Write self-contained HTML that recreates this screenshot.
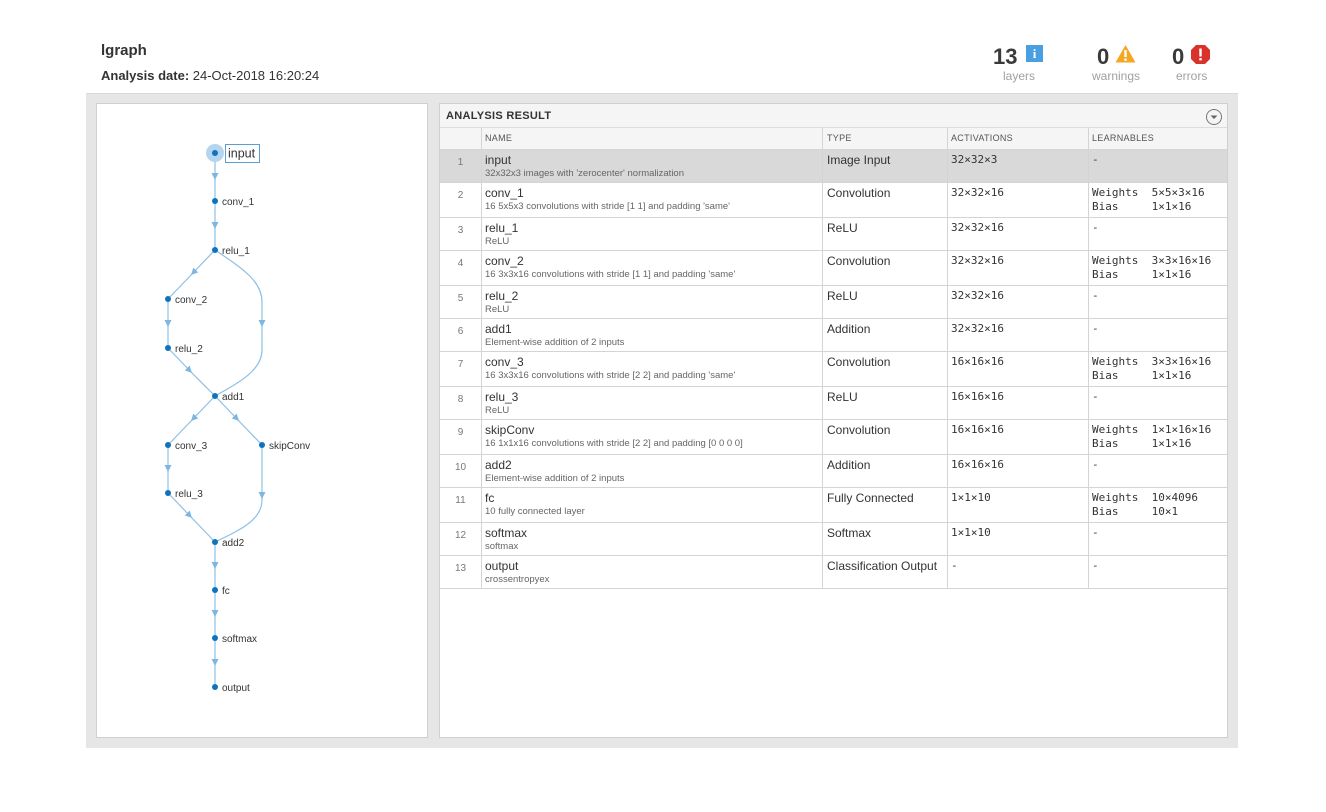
<!DOCTYPE html>
<html><head><meta charset="utf-8"><style>
*{margin:0;padding:0;box-sizing:border-box}
body{width:1326px;height:812px;background:#fff;font-family:"Liberation Sans",Arial,sans-serif;position:relative;overflow:hidden;color:#333}
.abs{position:absolute}
.title{left:101px;top:42px;font-size:15px;font-weight:bold;color:#333}
.date{left:101px;top:68px;font-size:13px;color:#333}
.stat{top:44px;font-size:22px;font-weight:bold;color:#3a3a3a}
.lbl{top:69px;font-size:12px;color:#a0a0a0}
.bg{left:86px;top:93px;width:1152px;height:655px;background:#e6e6e6;border-top:1px solid #d8d8d8}
.lp{left:96px;top:103px;width:332px;height:635px;background:#fff;border:1px solid #d0d0d0}
.rp{left:439px;top:103px;width:789px;height:635px;background:#fff;border:1px solid #d0d0d0}
.hdr{position:absolute;left:0;top:0;width:787px;height:24px;background:#f5f5f5;border-bottom:1px solid #ddd;font-size:11px;font-weight:bold;letter-spacing:.3px;padding:6px 0 0 6px;color:#333}
.row{position:absolute;left:0;width:787px;border-bottom:1px solid #d4d4d4;font-size:12px}
.row>div{position:absolute;top:0;bottom:0;border-right:1px solid #d4d4d4}
.c0{left:0;width:42px;text-align:center;color:#777;font-size:10px;padding-top:7px}
.c1{left:42px;width:341px;padding:3px 0 0 3px}
.c2{left:383px;width:125px;padding:3px 0 0 4px}
.c3{left:508px;width:141px;padding:3px 0 0 3px;font-family:"DejaVu Sans Mono","Liberation Mono",monospace;font-size:11px}
.c4{left:649px;width:138px;border-right:none!important;padding:3px 0 0 3px;font-family:"DejaVu Sans Mono","Liberation Mono",monospace;font-size:11px;line-height:14px;white-space:pre}
.sub{font-size:9.5px;color:#666;margin-top:1px}
.ch{top:24px;height:22px;background:#f5f5f5;font-size:9px;color:#555}
.ch>div{padding-top:5px!important;font-family:"Liberation Sans",sans-serif!important;font-size:9px!important;letter-spacing:.3px;line-height:normal!important}
.sel{background:#d9d9d9}
</style></head><body>
<div class="abs title">lgraph</div>
<div class="abs date"><b>Analysis date:</b> 24-Oct-2018 16:20:24</div>
<div class="abs stat" style="left:993px">13</div>
<div class="abs" style="left:1026px;top:45px;width:17px;height:17px;background:#4a9fe0;color:#fff;font:bold 13px 'Liberation Serif',serif;text-align:center;line-height:17px">i</div>
<div class="abs lbl" style="left:1003px">layers</div>
<div class="abs stat" style="left:1097px">0</div>
<svg class="abs" style="left:1115px;top:44px" width="21" height="19"><path d="M10.5 1 L20.5 18.5 L0.5 18.5Z" fill="#f5a623"/><rect x="9.3" y="6" width="2.4" height="7" fill="#fff"/><rect x="9.3" y="14.5" width="2.4" height="2.3" fill="#fff"/></svg>
<div class="abs lbl" style="left:1092px">warnings</div>
<div class="abs stat" style="left:1172px">0</div>
<svg class="abs" style="left:1190px;top:44px" width="21" height="21"><polygon points="6,1 15,1 20,6 20,15 15,20 6,20 1,15 1,6" fill="#d9322a"/><rect x="9.3" y="4.5" width="2.4" height="8" fill="#fff"/><rect x="9.3" y="14" width="2.4" height="2.4" fill="#fff"/></svg>
<div class="abs lbl" style="left:1176px">errors</div>
<div class="abs bg"></div>
<div class="abs lp"></div>
<svg class="abs" style="left:0;top:0" width="1326" height="812">
<defs><marker id="a" viewBox="0 0 10 10" refX="10" refY="5" markerWidth="7" markerHeight="7" markerUnits="userSpaceOnUse" orient="auto"><path d="M0 0L10 5L0 10z" fill="#7fb6e0"/></marker></defs>
<g stroke="#8cc0e6" stroke-width="1.2" fill="none">
<line x1="215" y1="153" x2="215" y2="180" marker-end="url(#a)"/><line x1="215" y1="178" x2="215" y2="201"/>
<line x1="215" y1="201" x2="215" y2="229" marker-end="url(#a)"/><line x1="215" y1="227" x2="215" y2="250"/>
<line x1="215" y1="250" x2="191" y2="275" marker-end="url(#a)"/><line x1="192" y1="274" x2="168" y2="299"/>
<line x1="168" y1="299" x2="168" y2="327" marker-end="url(#a)"/><line x1="168" y1="325" x2="168" y2="348"/>
<line x1="168" y1="348" x2="192" y2="373" marker-end="url(#a)"/><line x1="191" y1="372" x2="215" y2="396"/>
<path d="M215 250 C245 270 262 282 262 302 L262 327" marker-end="url(#a)"/><path d="M262 325 L262 350 C262 370 240 382 215 396"/>
<line x1="215" y1="396" x2="191" y2="421" marker-end="url(#a)"/><line x1="192" y1="420" x2="168" y2="445"/>
<line x1="215" y1="396" x2="239" y2="421" marker-end="url(#a)"/><line x1="238" y1="420" x2="262" y2="445"/>
<line x1="168" y1="445" x2="168" y2="472" marker-end="url(#a)"/><line x1="168" y1="470" x2="168" y2="493"/>
<line x1="168" y1="493" x2="192" y2="518" marker-end="url(#a)"/><line x1="191" y1="517" x2="215" y2="542"/>
<line x1="262" y1="445" x2="262" y2="499" marker-end="url(#a)"/><path d="M262 497 L262 500 C262 520 240 530 215 542"/>
<line x1="215" y1="542" x2="215" y2="569" marker-end="url(#a)"/><line x1="215" y1="567" x2="215" y2="590"/>
<line x1="215" y1="590" x2="215" y2="617" marker-end="url(#a)"/><line x1="215" y1="615" x2="215" y2="638"/>
<line x1="215" y1="638" x2="215" y2="666" marker-end="url(#a)"/><line x1="215" y1="664" x2="215" y2="687"/>
</g>
<circle cx="215" cy="153" r="9" fill="#b5d5ef"/>
<g fill="#0e72bd">
<circle cx="215" cy="153" r="3"/><circle cx="215" cy="201" r="3"/><circle cx="215" cy="250" r="3"/>
<circle cx="168" cy="299" r="3"/><circle cx="168" cy="348" r="3"/><circle cx="215" cy="396" r="3"/>
<circle cx="168" cy="445" r="3"/><circle cx="262" cy="445" r="3"/><circle cx="168" cy="493" r="3"/>
<circle cx="215" cy="542" r="3"/><circle cx="215" cy="590" r="3"/><circle cx="215" cy="638" r="3"/><circle cx="215" cy="687" r="3"/>
</g>
<rect x="225.5" y="144.5" width="34" height="18" fill="#fff" stroke="#5a9fd4"/>
<g font-family="Liberation Sans,sans-serif" font-size="10" fill="#333">
<text x="228" y="157.5" font-size="12.5">input</text>
<text x="222" y="205">conv_1</text><text x="222" y="254">relu_1</text>
<text x="175" y="303">conv_2</text><text x="175" y="352">relu_2</text><text x="222" y="400">add1</text>
<text x="175" y="449">conv_3</text><text x="269" y="449">skipConv</text><text x="175" y="497">relu_3</text>
<text x="222" y="546">add2</text><text x="222" y="594">fc</text><text x="222" y="642">softmax</text><text x="222" y="691">output</text>
</g>
</svg>
<div class="abs rp">
<div class="hdr">ANALYSIS RESULT</div>
<svg style="position:absolute;left:765px;top:4px" width="18" height="18"><circle cx="9" cy="9" r="7.5" fill="none" stroke="#777"/><path d="M5.5 7.5L12.5 7.5L9 11z" fill="#666"/></svg>
<div class="row ch"><div class="c0"></div><div class="c1">NAME</div><div class="c2">TYPE</div><div class="c3">ACTIVATIONS</div><div class="c4">LEARNABLES</div></div>
<div class="row sel" style="top:46px;height:33px"><div class="c0">1</div><div class="c1">input<div class="sub">32x32x3 images with 'zerocenter' normalization</div></div><div class="c2">Image Input</div><div class="c3">32×32×3</div><div class="c4">-</div></div>
<div class="row" style="top:79px;height:35px"><div class="c0">2</div><div class="c1">conv_1<div class="sub">16 5x5x3 convolutions with stride [1 1] and padding 'same'</div></div><div class="c2">Convolution</div><div class="c3">32×32×16</div><div class="c4">Weights  5×5×3×16
Bias     1×1×16</div></div>
<div class="row" style="top:114px;height:33px"><div class="c0">3</div><div class="c1">relu_1<div class="sub">ReLU</div></div><div class="c2">ReLU</div><div class="c3">32×32×16</div><div class="c4">-</div></div>
<div class="row" style="top:147px;height:35px"><div class="c0">4</div><div class="c1">conv_2<div class="sub">16 3x3x16 convolutions with stride [1 1] and padding 'same'</div></div><div class="c2">Convolution</div><div class="c3">32×32×16</div><div class="c4">Weights  3×3×16×16
Bias     1×1×16</div></div>
<div class="row" style="top:182px;height:33px"><div class="c0">5</div><div class="c1">relu_2<div class="sub">ReLU</div></div><div class="c2">ReLU</div><div class="c3">32×32×16</div><div class="c4">-</div></div>
<div class="row" style="top:215px;height:33px"><div class="c0">6</div><div class="c1">add1<div class="sub">Element-wise addition of 2 inputs</div></div><div class="c2">Addition</div><div class="c3">32×32×16</div><div class="c4">-</div></div>
<div class="row" style="top:248px;height:35px"><div class="c0">7</div><div class="c1">conv_3<div class="sub">16 3x3x16 convolutions with stride [2 2] and padding 'same'</div></div><div class="c2">Convolution</div><div class="c3">16×16×16</div><div class="c4">Weights  3×3×16×16
Bias     1×1×16</div></div>
<div class="row" style="top:283px;height:33px"><div class="c0">8</div><div class="c1">relu_3<div class="sub">ReLU</div></div><div class="c2">ReLU</div><div class="c3">16×16×16</div><div class="c4">-</div></div>
<div class="row" style="top:316px;height:35px"><div class="c0">9</div><div class="c1">skipConv<div class="sub">16 1x1x16 convolutions with stride [2 2] and padding [0 0 0 0]</div></div><div class="c2">Convolution</div><div class="c3">16×16×16</div><div class="c4">Weights  1×1×16×16
Bias     1×1×16</div></div>
<div class="row" style="top:351px;height:33px"><div class="c0">10</div><div class="c1">add2<div class="sub">Element-wise addition of 2 inputs</div></div><div class="c2">Addition</div><div class="c3">16×16×16</div><div class="c4">-</div></div>
<div class="row" style="top:384px;height:35px"><div class="c0">11</div><div class="c1">fc<div class="sub">10 fully connected layer</div></div><div class="c2">Fully Connected</div><div class="c3">1×1×10</div><div class="c4">Weights  10×4096
Bias     10×1</div></div>
<div class="row" style="top:419px;height:33px"><div class="c0">12</div><div class="c1">softmax<div class="sub">softmax</div></div><div class="c2">Softmax</div><div class="c3">1×1×10</div><div class="c4">-</div></div>
<div class="row" style="top:452px;height:33px"><div class="c0">13</div><div class="c1">output<div class="sub">crossentropyex</div></div><div class="c2">Classification Output</div><div class="c3">-</div><div class="c4">-</div></div>
</div>
</body></html>
